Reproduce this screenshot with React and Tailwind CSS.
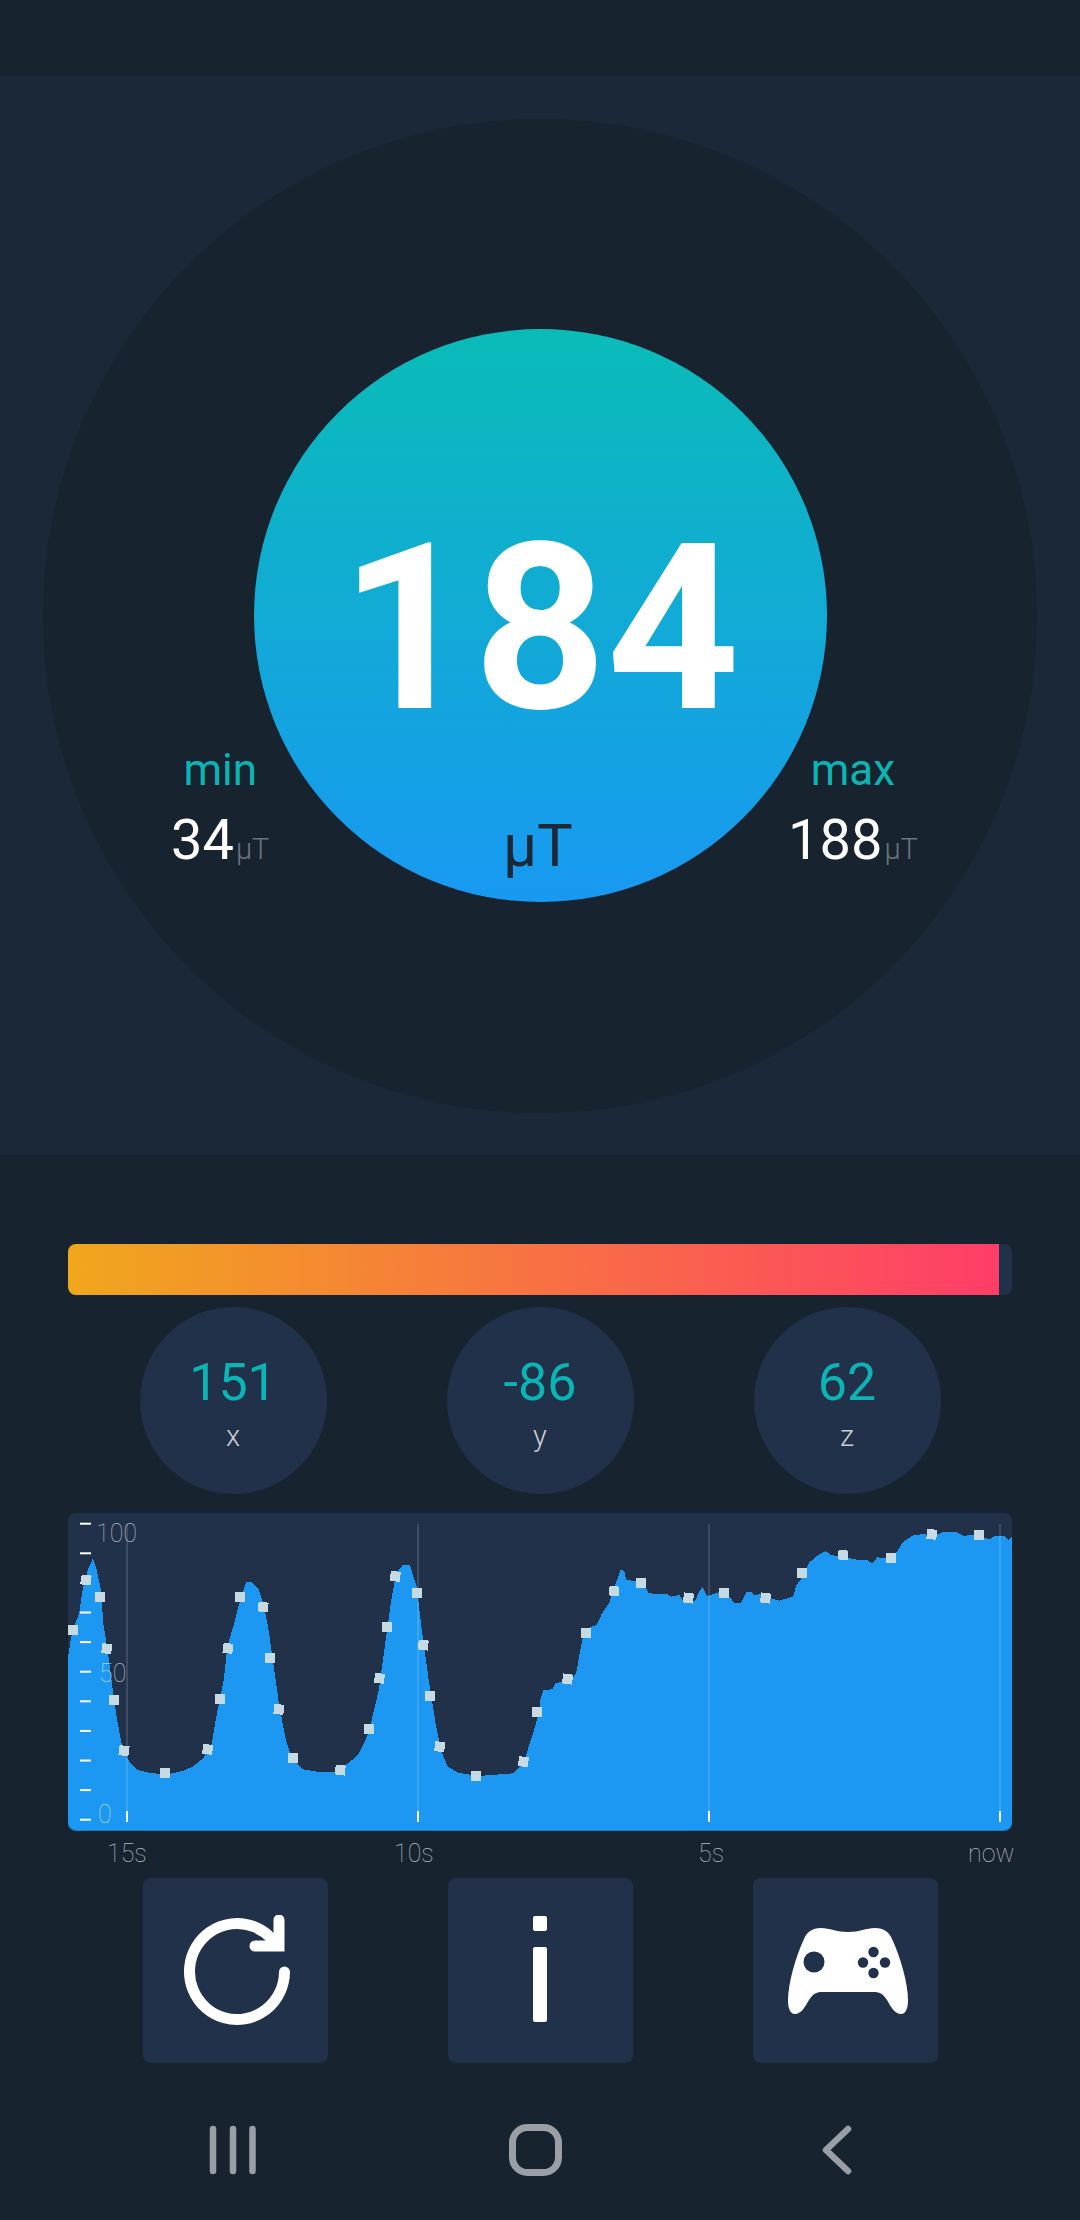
const font = { fontFamily: 'Roboto, sans-serif' };

// outline of the trace, read off the reference as page pixels
const leftTrace = [[198,530],[205,480],[215,440],[230,400],[240,330],[255,270],[270,235],[280,265],[293,330],[300,430],[315,530],[325,610],[340,720],[355,800],[375,845],[400,870],[440,880],[490,882],[530,873],[560,860],[590,835],[615,790],[630,700],[650,600],[660,500],[680,430],[695,370],[715,305],[730,305],[750,325],[765,370],[780,450],[795,560],[810,670],[830,780],[850,840],[880,868],[930,877],[980,875],[1010,850],[1040,825],[1070,760],[1100,630],[1120,480],[1135,370],[1150,280],[1170,255],[1190,255],[1210,320],[1225,450],[1245,600],[1265,730],[1280,810],[1300,860],[1330,878],[1390,888],[1440,884],[1490,880],[1520,850],[1545,770],[1568,690]];
const rightTrace = [[0,660],[10,630],[35,628],[45,610],[90,600],[105,580],[115,520],[125,470],[145,442],[165,435],[180,400],[200,370],[220,310],[235,268],[245,275],[250,300],[300,305],[315,340],[370,343],[380,350],[405,345],[415,362],[450,362],[465,330],[472,322],[485,348],[510,340],[525,335],[550,350],[565,370],[585,368],[600,335],[615,335],[620,345],[640,343],[670,355],[695,362],[735,350],[745,315],[770,280],[780,250],[800,230],[830,213],[845,226],[880,228],[900,235],[925,240],[950,240],[965,250],[980,232],[1005,235],[1030,225],[1055,185],[1085,165],[1110,163],[1150,165],[1170,157],[1205,155],[1230,167],[1270,165],[1305,178],[1320,168],[1350,168],[1360,180],[1370,170]];
const leftDots = [[212,450],[250,300],[290,350],[310,506],[330,660],[360,812],[480,880],[603,808],[638,656],[662,505],[697,352],[764,381],[785,535],[810,688],[852,835],[988,870],[1071,747],[1102,595],[1125,441],[1148,289],[1211,340],[1229,495],[1250,648],[1277,800],[1383,889],[1520,845],[1560,695]];
const rightDots = [[80,597],[133,460],[215,333],[292,310],[431,354],[535,340],[655,354],[760,280],[880,225],[1020,235],[1138,163],[1275,165]];

const fromLeft = ([x, y]) => [x / 2.904, 1480 + y / 3];
const fromRight = ([x, y]) => [540 + x / 2.904, 1480 + y / 3];
const trace = [...leftTrace.map(fromLeft), ...rightTrace.map(fromRight)];
const dots = [...leftDots.map(fromLeft), ...rightDots.map(fromRight)];
const tracePath = `M68 1831 ${trace.map(([x, y]) => `L${x.toFixed(1)} ${y.toFixed(1)}`).join(' ')} L1012 1831 Z`;
const ticks = Array.from({ length: 11 }, (_, i) => 1523.7 + i * 29.6);
const gridLines = [127, 418, 709, 1000];

function Chart() {
  return (
    <div className="mt-[19px] mx-[68px] h-[318px] rounded-lg overflow-hidden bg-[#22314a] border-b border-[#1a7fc9]">
      <svg viewBox="68 1513 944 318" width="944" height="318" className="block">
        <path d={tracePath} fill="#1c98f2" shapeRendering="crispEdges" />
        {gridLines.map((x) => (
          <g key={x}>
            <rect x={x - 1} y="1524" width="2" height="298" fill="#ffffff" opacity="0.13" />
            <rect x={x - 1} y="1811" width="2" height="11" fill="#ffffff" />
          </g>
        ))}
        {ticks.map((y) => (
          <rect key={y} x="80" y={y - 1} width="11" height="2" fill="#ffffff" />
        ))}
        {dots.map(([x, y], i) => (
          <rect
            key={i}
            x={x - 5}
            y={y - 5}
            width="10"
            height="10"
            fill="#c6dae4"
            shapeRendering="crispEdges"
            transform={`rotate(${(i * 7) % 14} ${x} ${y})`}
          />
        ))}
        <g fill="#ffffff" fillOpacity="0.62" fontSize="25" fontWeight="100" style={font}>
          <text x="96" y="1541.5">100</text>
          <text x="99" y="1681.5">50</text>
          <text x="98" y="1823">0</text>
        </g>
      </svg>
    </div>
  );
}

function Axis({ value, label }) {
  return (
    <div className="w-[187px] h-[187px] rounded-full bg-[#22314a] flex flex-col items-center">
      <span className="mt-[45px] text-[52px] leading-[62px] text-[#0bb5b5]">{value}</span>
      <span className="mt-[4px] text-[29px] leading-[36px] text-[#c9ccd1] font-light">{label}</span>
    </div>
  );
}

function Button({ children }) {
  return (
    <div className="w-[185px] h-[185px] rounded-lg bg-[#22314a] flex items-center justify-center">
      {children}
    </div>
  );
}

function Stat({ label, value, className }) {
  return (
    <div className={`absolute flex flex-col items-center ${className}`}>
      <span className="text-[44px] leading-[50px] text-[#0bb5b5]">{label}</span>
      <span className="mt-[12px] flex items-baseline text-white">
        <span className="text-[56px] leading-[66px]">{value}</span>
        <span className="ml-[2px] text-[29px] leading-[66px] text-[#6b7480] font-light">µT</span>
      </span>
    </div>
  );
}

export default function App() {
  return (
    <div className="w-[1080px] h-[2220px] bg-[#182330] overflow-hidden" style={font}>
      <div className="h-[76px]" />

      {/* Gauge */}
      <div className="h-[1079px] bg-[#1b2838] flex items-center justify-center">
        <div className="relative w-[994px] h-[994px] rounded-full bg-[#182330] flex items-center justify-center">
          <div className="w-[573px] h-[573px] rounded-full bg-linear-to-b/srgb from-[#0abcb8] to-[#1899f2] flex flex-col items-center">
            <span className="mt-[164px] text-[232px] leading-[272px] font-bold text-white">184</span>
            <span className="mt-[46px] -ml-[4px] text-[60px] leading-[70px] text-[#1a2838]">µT</span>
          </div>
          <Stat label="min" value="34" className="left-[128px] top-[626px]" />
          <Stat label="max" value="188" className="left-[745px] top-[626px]" />
        </div>
      </div>

      {/* Level bar */}
      <div className="mt-[89px] mx-[68px] h-[51px] rounded-lg overflow-hidden bg-[#22314a]">
        <div className="w-[931px] h-full bg-linear-to-r/srgb from-[#f0a71c] to-[#ff3d68]" />
      </div>

      <div className="mt-[12px] flex justify-center gap-[120px]">
        <Axis value="151" label="x" />
        <Axis value="-86" label="y" />
        <Axis value="62" label="z" />
      </div>

      <Chart />

      <div className="mt-[8px] pl-[107px] flex text-[25px] leading-[30px] font-thin text-[#b4b9c0]">
        <span className="w-[287px]">15s</span>
        <span className="w-[304px]">10s</span>
        <span className="w-[270px]">5s</span>
        <span>now</span>
      </div>

      <div className="mt-[9px] flex justify-center gap-[120px]">
        <Button>
          <svg width="110" height="112" viewBox="181 1916 110 112" fill="none" stroke="#ffffff" strokeWidth="11" strokeLinecap="round" className="ml-[3px]">
            <path d="M283.5 1973 A47.5 48 0 1 1 270 1939" />
            <path d="M278 1921 V1947 H254" />
          </svg>
        </Button>
        <Button>
          <div className="flex flex-col items-center -mt-[4px]">
            <div className="w-[14px] h-[15px] rounded-[2px] bg-white" />
            <div className="mt-[16px] w-[14px] h-[75px] rounded-[2px] bg-white" />
          </div>
        </Button>
        <Button>
          <svg width="120" height="86" viewBox="0 0 120 86" className="ml-[6px] mt-[1px]">
            <path fill="#ffffff" d="M33 0 C42 0 48 4 60 4 C72 4 78 0 87 0 C96 0 101 4 104 11 C112 28 120 55 120 72 C120 82 117 86 113 86 C107 86 103 79 99 72 C95 66 92 64 86 64 L34 64 C28 64 25 66 21 72 C17 79 13 86 7 86 C3 86 0 82 0 72 C0 55 8 28 16 11 C19 4 24 0 33 0 Z" />
            <g fill="#22314a">
              <circle cx="26" cy="34" r="10.500" />
              <circle cx="85.500" cy="24" r="5.200" />
              <circle cx="75" cy="34.500" r="5.200" />
              <circle cx="97" cy="34.500" r="5.200" />
              <circle cx="85.500" cy="45" r="5.200" />
            </g>
          </svg>
        </Button>
      </div>

      {/* System navigation */}
      <div className="mt-[61px] h-[52px]">
        <svg width="1080" height="52" viewBox="0 2125 1080 52" fill="none" stroke="#9a9fa6" strokeLinecap="round" strokeLinejoin="round" className="block">
          <path d="M213 2130 V2172 M233 2130 V2172 M252.500 2130 V2172" strokeWidth="6.500" />
          <rect x="512.500" y="2128.500" width="46" height="45" rx="15" strokeWidth="7" />
          <path d="M848 2130 L826 2151 L848 2172" strokeWidth="6.500" />
        </svg>
      </div>
    </div>
  );
}
